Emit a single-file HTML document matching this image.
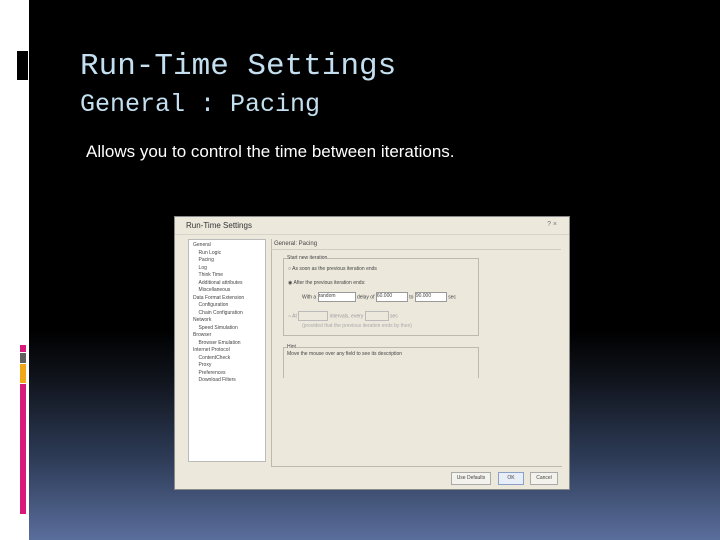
<!DOCTYPE html>
<html><head><style>
body{margin:0;width:720px;height:540px;overflow:hidden;background:#fff;position:relative;font-family:"Liberation Sans",sans-serif}
.main{position:absolute;left:29px;top:0;width:691px;height:540px;background:linear-gradient(to bottom,#000 0,#000 330px,#10141c 380px,#2e3c58 460px,#5a6e9c 540px)}
.t1{position:absolute;left:80px;top:49px;font-family:"Liberation Mono",monospace;font-size:31px;color:#c4e0f0}
.t2{position:absolute;left:80px;top:90px;font-family:"Liberation Mono",monospace;font-size:25px;color:#c4e0f0}
.body{position:absolute;left:86px;top:142px;font-size:17px;color:#fff;letter-spacing:0}
.dlg{position:absolute;left:174px;top:216px;width:396px;height:274px;background:#ece8dc;border:1px solid #8a8a8a;box-sizing:border-box;font-size:5px;color:#444}
.abs{position:absolute}
.grp{position:absolute;border:1px solid #bdb9ad}
</style></head><body>
<div class="abs" style="left:17px;top:51px;width:11px;height:29px;background:#000"></div>
<div class="abs" style="left:20px;top:345px;width:6px;height:7px;background:#d81b7a"></div>
<div class="abs" style="left:20px;top:353px;width:6px;height:10px;background:#606060"></div>
<div class="abs" style="left:20px;top:364px;width:6px;height:19px;background:#f0a818"></div>
<div class="abs" style="left:20px;top:384px;width:6px;height:130px;background:#d81b7a"></div>
<div class="main"></div>
<div class="t1">Run-Time Settings</div>
<div class="t2">General : Pacing</div>
<div class="body">Allows you to control the time between iterations.</div>
<div class="dlg">
 <div class="abs" style="left:11px;top:4px;font-size:8px;color:#333">Run-Time Settings</div>
 <div class="abs" style="right:12px;top:4px;font-size:7px;color:#777">? ×</div>
 <div class="abs" style="left:0;top:17px;width:394px;border-top:1px solid #d8d4c8"></div>
 <div class="abs" style="left:13px;top:22px;width:78px;height:223px;background:#fff;border:1px solid #bbb;line-height:7.5px;padding:2px 0 0 4px;box-sizing:border-box">
  General<br>&nbsp;&nbsp;&nbsp;&nbsp;Run Logic<br>&nbsp;&nbsp;&nbsp;&nbsp;Pacing<br>&nbsp;&nbsp;&nbsp;&nbsp;Log<br>&nbsp;&nbsp;&nbsp;&nbsp;Think Time<br>&nbsp;&nbsp;&nbsp;&nbsp;Additional attributes<br>&nbsp;&nbsp;&nbsp;&nbsp;Miscellaneous<br>Data Format Extension<br>&nbsp;&nbsp;&nbsp;&nbsp;Configuration<br>&nbsp;&nbsp;&nbsp;&nbsp;Chain Configuration<br>Network<br>&nbsp;&nbsp;&nbsp;&nbsp;Speed Simulation<br>Browser<br>&nbsp;&nbsp;&nbsp;&nbsp;Browser Emulation<br>Internet Protocol<br>&nbsp;&nbsp;&nbsp;&nbsp;ContentCheck<br>&nbsp;&nbsp;&nbsp;&nbsp;Proxy<br>&nbsp;&nbsp;&nbsp;&nbsp;Preferences<br>&nbsp;&nbsp;&nbsp;&nbsp;Download Filters
 </div>
 <div class="grp" style="left:96px;top:22px;width:290px;height:227px;border-top:none;border-right:none"></div>
 <div class="abs" style="left:99px;top:24px;font-size:6px">General: Pacing</div>
 <div class="abs" style="left:96px;top:32px;width:290px;border-top:1px solid #d0ccc0"></div>
 <div class="grp" style="left:108px;top:41px;width:194px;height:76px"></div>
 <div class="abs" style="left:112px;top:38px;background:#ece8dc">Start new iteration</div>
 <div class="abs" style="left:113px;top:49px">○ As soon as the previous iteration ends</div>
 <div class="abs" style="left:113px;top:63px">◉ After the previous iteration ends:</div>
 <div class="abs" style="left:127px;top:75px">With a <span style="display:inline-block;width:36px;height:8px;background:#fff;border:1px solid #999;vertical-align:middle">random</span> delay of <span style="display:inline-block;width:30px;height:8px;background:#fff;border:1px solid #999;vertical-align:middle">60.000</span> to <span style="display:inline-block;width:30px;height:8px;background:#fff;border:1px solid #999;vertical-align:middle">90.000</span> sec</div>
 <div class="abs" style="left:113px;top:94px;color:#999">○ At <span style="display:inline-block;width:28px;height:8px;border:1px solid #bbb;vertical-align:middle"></span> intervals, every <span style="display:inline-block;width:22px;height:8px;border:1px solid #bbb;vertical-align:middle"></span> sec</div>
 <div class="abs" style="left:127px;top:106px;color:#aaa">(provided that the previous iteration ends by then)</div>
 <div class="grp" style="left:108px;top:130px;width:194px;height:30px;border-bottom:none"></div>
 <div class="abs" style="left:112px;top:127px;background:#ece8dc">Hint</div>
 <div class="abs" style="left:112px;top:134px">Move the mouse over any field to see its description</div>
 <div class="abs" style="left:276px;top:255px;width:38px;height:11px;border:1px solid #aaa;background:#f4f2ec;text-align:center;line-height:11px">Use Defaults</div>
 <div class="abs" style="left:323px;top:255px;width:24px;height:11px;border:1px solid #8aa0c8;background:#e8eef8;text-align:center;line-height:11px">OK</div>
 <div class="abs" style="left:355px;top:255px;width:26px;height:11px;border:1px solid #aaa;background:#f4f2ec;text-align:center;line-height:11px">Cancel</div>
</div>
</body></html>
